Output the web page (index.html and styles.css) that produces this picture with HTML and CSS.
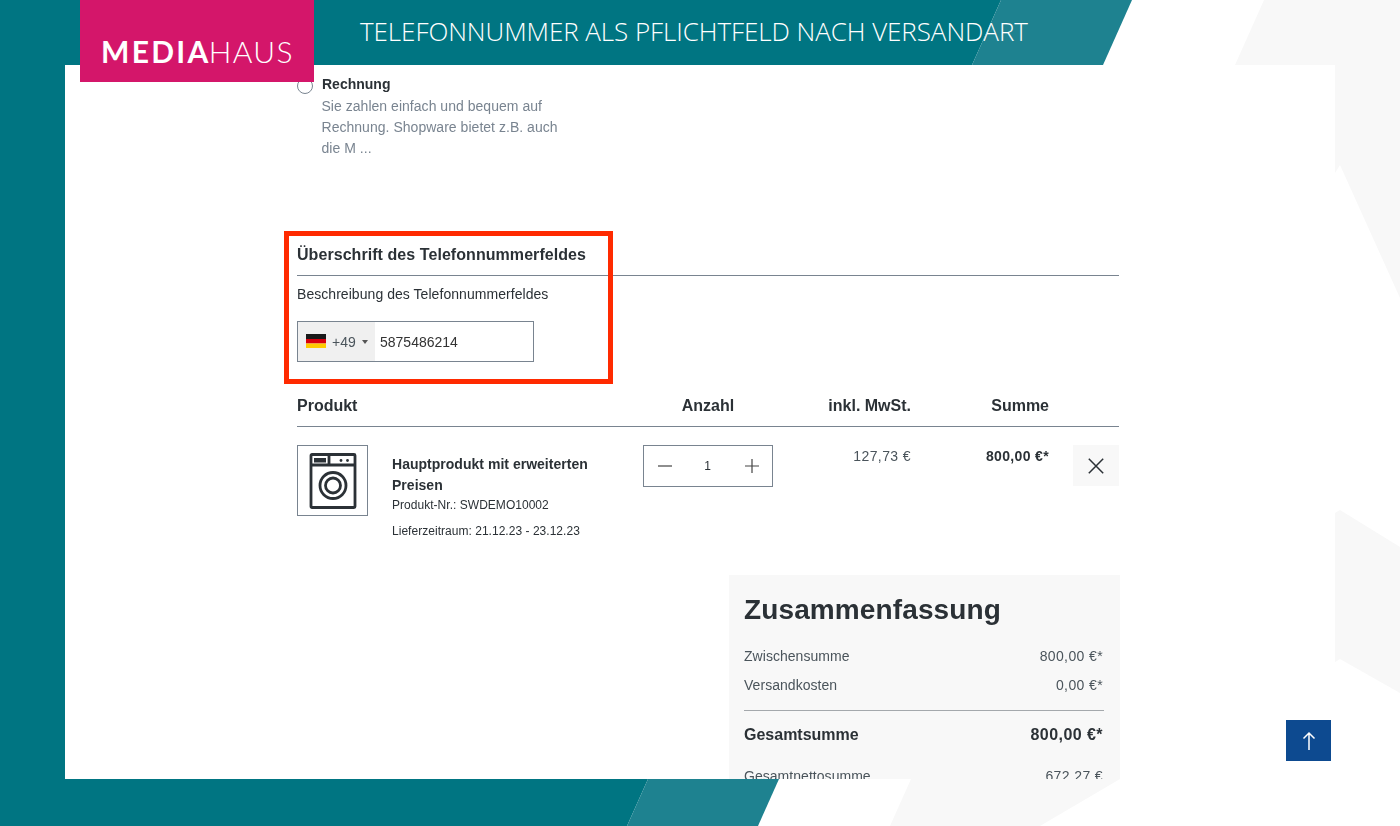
FILE: index.html
```html
<!DOCTYPE html>
<html lang="de">
<head>
<meta charset="utf-8">
<title>Telefonnummer als Pflichtfeld nach Versandart</title>
<link rel="stylesheet" href="styles.css">
</head>
<body>
<div class="slide">
  <svg class="backdrop" width="1400" height="826" viewBox="0 0 1400 826" aria-hidden="true">
    <polygon class="bg-teal" points="0,0 1001,0 972,65 65,65 65,779 648,779 627,826 0,826"/>
    <polygon class="bg-light" points="1001,0 1132,0 1103,65 972,65"/>
    <polygon class="bg-light" points="648,779 779,779 758,826 627,826"/>
    <polygon class="bg-grey" points="911,779 1120,779 1040,826 890,826"/>
    <polygon class="bg-grey" points="1264,0 1400,0 1400,298 1340,165 1335,173 1335,65 1235,65"/>
    <polygon class="bg-grey" points="1335,513 1340,510 1400,547 1400,693 1340,659 1335,662"/>
  </svg>

  <div class="logo"><span class="logo-bold">MEDIA</span><span class="logo-light">HAUS</span></div>
  <header class="title-bar"><h1 class="title">TELEFONNUMMER ALS PFLICHTFELD NACH VERSANDART</h1></header>

  <main class="panel">
    <div class="page">
      <div class="payment">
        <span class="radio"></span>
        <div class="payment-text">
          <div class="payment-name">Rechnung</div>
          <div class="payment-desc">Sie zahlen einfach und bequem auf<br>Rechnung. Shopware bietet z.B. auch<br>die M ...</div>
        </div>
      </div>

      <section class="phone">
        <h2 class="phone-title">Überschrift des Telefonnummerfeldes</h2>
        <p class="phone-desc">Beschreibung des Telefonnummerfeldes</p>
        <div class="phone-input">
          <div class="dial">
            <svg class="flag" width="20" height="14" viewBox="0 0 20 14" aria-hidden="true">
              <rect class="flag-black" width="20" height="5"/>
              <rect class="flag-red" y="5" width="20" height="4.5"/>
              <rect class="flag-gold" y="9.5" width="20" height="4.5"/>
            </svg>
            <span class="dial-code">+49</span>
            <span class="caret"></span>
          </div>
          <span class="phone-number">5875486214</span>
        </div>
        <div class="highlight"></div>
      </section>

      <div class="cart-head">
        <div>Produkt</div>
        <div class="center">Anzahl</div>
        <div class="right">inkl. MwSt.</div>
        <div class="right">Summe</div>
      </div>

      <div class="cart-row">
        <div class="product">
          <div class="thumb">
            <svg width="48" height="56" viewBox="0 0 48 56" aria-hidden="true">
              <g class="ink">
                <rect x="2" y="1.5" width="44" height="53" rx="1"/>
                <line x1="2" y1="12" x2="46" y2="12"/>
                <line x1="20" y1="2" x2="20" y2="12"/>
                <circle cx="24" cy="32.5" r="13"/>
                <circle cx="24" cy="32.5" r="7.5"/>
              </g>
              <rect class="ink-fill" x="5" y="5" width="12" height="4.5"/>
              <circle class="ink-fill" cx="32" cy="7.5" r="1.4"/>
              <circle class="ink-fill" cx="38.5" cy="7.5" r="1.4"/>
            </svg>
          </div>
          <div class="product-info">
            <div class="product-name">Hauptprodukt mit erweiterten<br>Preisen</div>
            <div class="product-meta">Produkt-Nr.: SWDEMO10002</div>
            <div class="product-meta delivery">Lieferzeitraum: 21.12.23 - 23.12.23</div>
          </div>
        </div>
        <div class="qty">
          <svg width="16" height="16" viewBox="0 0 16 16" aria-hidden="true"><line class="qty-line" x1="0" y1="8" x2="14" y2="8"/></svg>
          <span class="qty-value">1</span>
          <svg width="16" height="16" viewBox="0 0 16 16" aria-hidden="true"><path class="qty-line" d="M1 8H15M8 1V15"/></svg>
        </div>
        <div class="cell-price right">127,73 €</div>
        <div class="cell-total right">800,00 €*</div>
        <div class="remove">
          <svg width="16" height="16" viewBox="0 0 16 16" aria-hidden="true"><path class="remove-x" d="M.8 .8L15.2 15.2M15.2 .8L.8 15.2"/></svg>
        </div>
      </div>

      <aside class="summary">
        <h2 class="summary-title">Zusammenfassung</h2>
        <div class="sum-row"><span>Zwischensumme</span><span class="amount">800,00 €*</span></div>
        <div class="sum-row second"><span>Versandkosten</span><span class="amount">0,00 €*</span></div>
        <div class="sum-total"><span>Gesamtsumme</span><span class="amount-strong">800,00 €*</span></div>
        <div class="sum-row net"><span>Gesamtnettosumme</span><span class="amount">672,27 €</span></div>
      </aside>
    </div>
  </main>

  <button class="to-top" type="button" aria-label="Nach oben">
    <svg width="14" height="20" viewBox="0 0 14 20" aria-hidden="true"><path class="arrow" d="M7 19V2M1.5 7.5L7 2L12.5 7.5"/></svg>
  </button>
</div>
</body>
</html>
```
FILE: styles.css
```css
* { box-sizing: border-box; }
html, body { margin: 0; padding: 0; background: #fff; }
body { font-family: "Liberation Sans", Arial, sans-serif; color: #2b3136; }

.slide { position: relative; width: 1400px; height: 826px; overflow: hidden; background: #fff; }
.backdrop { position: absolute; left: 0; top: 0; }
.bg-teal { fill: #007582; }
.bg-light { fill: #1e8290; }
.bg-grey { fill: #f8f8f8; }

.logo {
  position: absolute; left: 80px; top: 0; z-index: 3;
  width: 234px; height: 82px; padding: 33px 0 0 21px;
  background: #d4166a; color: #fff;
  font-family: Lato, sans-serif; font-size: 30px; line-height: 36px; white-space: nowrap;
}
.logo-bold { margin-right: -2px; font-weight: 700; letter-spacing: 2.3px; }
.logo-light { font-weight: 300; letter-spacing: 1.4px; }

.title-bar { position: relative; height: 65px; padding-left: 360px; }
.title {
  margin: 0; color: #fff;
  font-family: "Open Sans", sans-serif; font-weight: 300; font-size: 26px; letter-spacing: -.07px; line-height: 63px; white-space: nowrap;
}

.panel { position: relative; width: 1270px; height: 714px; margin-left: 65px; overflow: hidden; background: #fff; }
.page { width: 822px; margin-left: 232px; padding-top: 9px; filter: blur(.3px); }

.payment { display: flex; gap: 9px; }
.radio { width: 16px; height: 16px; margin-top: 4px; border: 1px solid #798490; border-radius: 50%; background: #fff; flex: none; }
.payment-name { font-size: 14px; font-weight: 700; line-height: 21px; }
.payment-desc { margin-top: 1px; margin-left: -.5px; font-size: 14px; letter-spacing: .03px; line-height: 21px; color: #798490; }

.phone { position: relative; margin-top: 85px; }
.phone-title { margin: 0; padding-bottom: 9px; border-bottom: 1px solid #798490; font-size: 16px; font-weight: 700; letter-spacing: .06px; line-height: 22px; }
.phone-desc { margin: 8px 0 0; font-size: 14px; letter-spacing: .05px; line-height: 21px; }
.phone-input { display: flex; align-items: center; width: 237px; height: 41px; margin-top: 16px; border: 1px solid #798490; }
.dial { display: flex; align-items: center; width: 77px; height: 100%; padding-left: 8px; background: #f0f0f0; font-size: 14px; color: #4a545b; }
.flag { flex: none; margin-top: -1px; }
.flag-black { fill: #1a1a1a; }
.flag-red { fill: #d8000c; }
.flag-gold { fill: #ffcb00; }
.dial-code { margin-left: 6px; }
.caret { width: 0; height: 0; margin-left: 6px; border-left: 3px solid transparent; border-right: 3px solid transparent; border-top: 4px solid #555; }
.phone-number { margin-left: 5px; font-size: 14px; color: #333; }
.highlight { position: absolute; left: -13px; top: -13px; width: 329px; height: 153px; border: 5px solid #ff2a00; pointer-events: none; }

.cart-head, .cart-row { display: grid; grid-template-columns: 346px 130px 138px 138px 70px; }
.cart-head { margin-top: 33px; padding-bottom: 9px; border-bottom: 1px solid #798490; font-size: 16px; font-weight: 700; line-height: 22px; }
.center { text-align: center; }
.right { text-align: right; }

.cart-row { margin-top: 18px; align-items: start; }
.product { display: flex; gap: 24px; }
.thumb { display: flex; align-items: center; justify-content: center; width: 71px; height: 71px; border: 1px solid #798490; flex: none; }
.ink { fill: none; stroke: #2b3136; stroke-width: 2.8; }
.ink-fill { fill: #2b3136; }
.product-info { padding-top: 9px; }
.product-name { font-size: 14px; font-weight: 700; letter-spacing: .02px; line-height: 21px; }
.product-meta { font-size: 12px; letter-spacing: .03px; line-height: 18px; }
.delivery { margin-top: 8px; }

.qty { display: flex; align-items: center; justify-content: space-between; height: 42px; padding: 0 12px 0 14px; border: 1px solid #798490; }
.qty-value { font-size: 12px; margin-left: -3px; }
.qty-line { fill: none; stroke: #444; stroke-width: 1.2; }
.cell-price { padding-top: 1px; font-size: 14px; letter-spacing: .4px; line-height: 20px; color: #4a545b; }
.cell-total { padding-top: 1px; font-size: 14px; letter-spacing: .35px; line-height: 20px; font-weight: 700; }
.remove { display: flex; align-items: center; justify-content: center; width: 46px; height: 41px; margin-left: 24px; background: #f8f8f8; }
.remove-x { fill: none; stroke: #2b3136; stroke-width: 1.5; }

.summary { width: 391px; height: 300px; margin: 35px 0 0 432px; padding: 18px 16px 0 15px; background: #f8f8f8; }
.summary-title { margin: 0; font-size: 28px; font-weight: 700; letter-spacing: .12px; line-height: 34px; }
.sum-row { display: flex; justify-content: space-between; margin-top: 19px; font-size: 14px; letter-spacing: .04px; line-height: 21px; color: #4a545b; }
.sum-row.second { margin-top: 8px; padding-bottom: 14px; border-bottom: 1px solid #a4a8ac; }
.sum-total { display: flex; justify-content: space-between; margin-top: 13px; font-size: 16px; font-weight: 700; line-height: 22px; }
.sum-row.net { margin-top: 20px; }
.amount { letter-spacing: .38px; margin-right: 1px; }
.amount-strong { letter-spacing: .45px; margin-right: 1px; }

.to-top {
  position: absolute; left: 1286px; top: 720px; z-index: 2;
  display: flex; align-items: center; justify-content: center;
  width: 45px; height: 41px; padding: 0; border: 0; background: #0d4a90;
}
.arrow { fill: none; stroke: #fff; stroke-width: 1.5; }
```
